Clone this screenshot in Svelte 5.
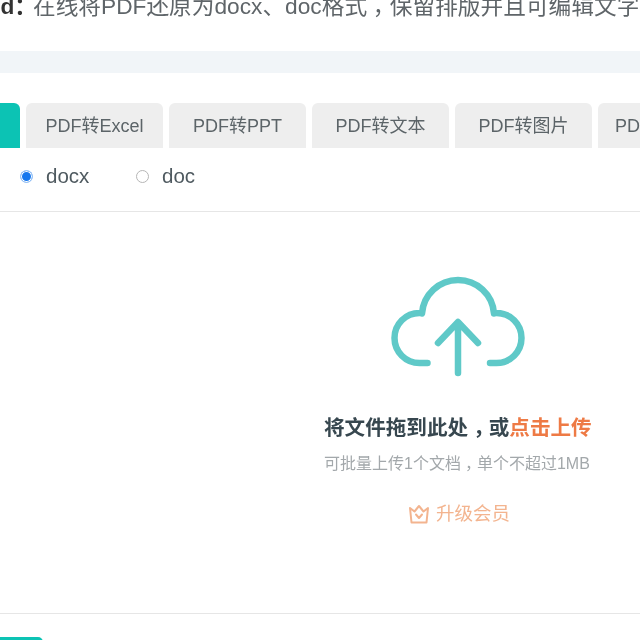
<script>
  const tabs = ['PDF转Excel', 'PDF转PPT', 'PDF转文本', 'PDF转图片', 'PDF转HTML'];
</script>

<div class="page">
  <p class="intro"><b>d<span class="punct">：</span></b>在线将PDF还原为docx、doc格式<span class="punct">，</span>保留排版并且可编辑文字</p>
  <div class="band"></div>
  <div class="tabs">
    <div class="tab active"></div>
    {#each tabs as t}
      <div class="tab">{t}</div>
    {/each}
  </div>
  <div class="formats">
    <label class="opt first"><span class="radio on"></span>docx</label>
    <label class="opt"><span class="radio"></span>doc</label>
  </div>
  <div class="drop">
    <svg class="cloud" width="136" height="104" viewBox="0 0 136 104" fill="none" stroke="#5fc9c8" stroke-width="6.500" stroke-linecap="round" stroke-linejoin="round">
      <path d="M37.500 87H29.500A25 25 0 0 1 29.500 37Q30.500 37 32 37.500A36.100 36.100 0 0 1 104 37.500Q105.500 37 106.500 37A25 25 0 0 1 106.500 87H100" />
      <path d="M48 67L68 46L88 67M68 47V97" />
    </svg>
    <div class="title">将文件拖到此处<span class="punct">，</span>或<span class="link">点击上传</span></div>
    <div class="hint">可批量上传1个文档<span class="punct">，</span>单个不超过1MB</div>
    <div class="vip">
      <svg width="22" height="20" viewBox="0 0 22 20" fill="none" stroke="#f3b48f" stroke-width="2" stroke-linejoin="round" stroke-linecap="round">
        <path d="M2 4L6.500 7.500L11 2L15.500 7.500L20 4L18.500 18.500H3.500Z" />
        <path d="M8 10.500L11 14L14 10.500" />
      </svg>
      升级会员
    </div>
  </div>
  <div class="footer"><div class="btn"></div></div>
</div>

<style>
  :global(body) {
    margin: 0;
    background: #fff;
  }
  .page {
    width: 640px;
    height: 640px;
    overflow: hidden;
    font-family: "Liberation Sans", "Noto Sans CJK SC", sans-serif;
    color: #5c6468;
    filter: blur(0.4px);
  }
  .punct {
    display: inline-block;
    padding-left: 0.25em;
    margin-right: -0.25em;
  }
  .intro {
    margin: 0;
    height: 51px;
    font-size: 22.700px;
    line-height: 13px;
    white-space: pre;
    color: #5f6569;
    display: flex;
  }
  .intro b {
    color: #333;
    font-weight: 700;
    flex: 0 0 33px;
    min-width: 0;
    display: flex;
    justify-content: flex-end;
  }
  .intro b .punct {
    padding-left: 0;
    margin-right: -4px;
  }
  .band {
    height: 22px;
    background: #f1f5f8;
  }
  .tabs {
    display: flex;
    gap: 6px;
    margin: 30px 0 0 -117px;
  }
  .tab {
    flex: 0 0 137px;
    height: 45px;
    border-radius: 6px 6px 0 0;
    background: #eeeeee;
    font-size: 18px;
    line-height: 46px;
    text-align: center;
    color: #5c6468;
    white-space: nowrap;
    overflow: hidden;
  }
  .tab.active {
    background: #0cc3b4;
  }
  .formats {
    display: flex;
    align-items: center;
    height: 64px;
    padding-left: 20px;
    padding-bottom: 7px;
    border-bottom: 1px solid #e6e6e6;
    box-sizing: border-box;
    font-size: 20.500px;
    color: #4f5a60;
  }
  .opt {
    display: flex;
    align-items: center;
    gap: 13px;
  }
  .opt.first {
    width: 116px;
  }
  .radio {
    width: 11px;
    height: 11px;
    border: 1.500px solid #b5b5b5;
    border-radius: 50%;
    box-sizing: content-box;
  }
  .radio.on {
    background: #1677ee;
    border-color: #9cc5f5;
    box-shadow: inset 0 0 0 1px #fff;
  }
  .drop {
    height: 402px;
    width: 640px;
    padding-left: 324px;
    box-sizing: border-box;
    border-bottom: 1px solid #e6e6e6;
    display: flex;
    flex-direction: column;
  }
  .cloud {
    margin: 64px 0 0 65.500px;
    flex: none;
  }
  .title {
    margin-top: 35px;
    font-size: 20.600px;
    line-height: 26px;
    font-weight: 700;
    color: #37474f;
    white-space: nowrap;
  }
  .link {
    color: #ee7a45;
  }
  .hint {
    margin-top: 13px;
    font-size: 16px;
    line-height: 20px;
    color: #a3a8ab;
    white-space: nowrap;
  }
  .vip {
    margin: 28px 0 0 84px;
    display: flex;
    align-items: center;
    gap: 6px;
    font-size: 18.500px;
    line-height: 24px;
    color: #f3b48f;
    white-space: nowrap;
  }
  .footer {
    padding-top: 23px;
  }
  .btn {
    width: 43px;
    height: 20px;
    background: #0cc3b4;
    border-radius: 0 5px 0 0;
  }
</style>
